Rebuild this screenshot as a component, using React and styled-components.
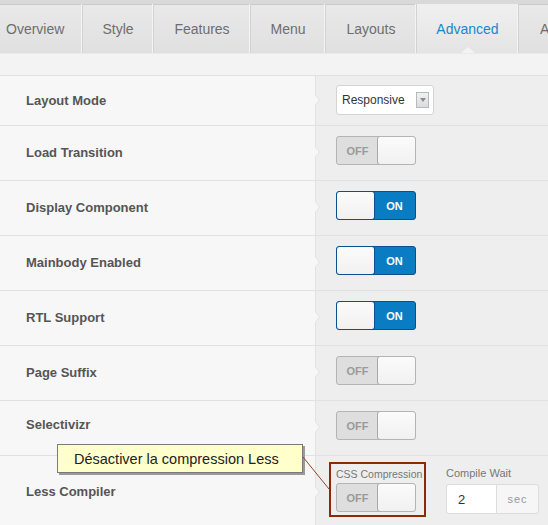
import styled, { createGlobalStyle } from 'styled-components'

const GlobalStyle = createGlobalStyle`
  html, body {
    margin: 0;
    padding: 0;
    background: #f7f7f7;
    font-family: 'Liberation Sans', Arial, sans-serif;
  }
`

const Page = styled.div`
  width: 548px;
  height: 525px;
  overflow: hidden;
  position: relative;
  background: #f7f7f7;
`
const TabBar = styled.div`
  height: 49px;
  display: flex;
  border-top: 4px solid #d9d9d9;
  box-shadow: inset 0 1px 0 #c9c9c9;
  background: linear-gradient(#e9e9e9, #e0e0e0);
  overflow: hidden;
  white-space: nowrap;
`
const Tab = styled.div`
  position: relative;
  flex: none;
  width: ${({ $w }) => $w}px;
  box-sizing: border-box;
  display: flex;
  align-items: center;
  justify-content: ${({ $pl }) => ($pl ? 'flex-start' : 'center')};
  padding-left: ${({ $pl }) => $pl || 0}px;
  font-size: 14px;
  color: ${({ $active }) => ($active ? '#1a87d0' : '#6e6e6e')};
  background: ${({ $active }) =>
    $active ? 'linear-gradient(#f0f0f0, #e4e4e4)' : 'transparent'};
  border-right: 1px solid #d2d2d2;
  box-shadow: inset -1px 0 0 #f4f4f4;
  &::after {
    content: '';
    display: ${({ $active }) => ($active ? 'block' : 'none')};
    position: absolute;
    bottom: 0;
    left: 50%;
    margin-left: -7px;
    border: 7px solid transparent;
    border-top: 0;
    border-bottom: 6px solid #f3f3f3;
  }
`
const SubBar = styled.div`
  height: 21px;
  background: #f3f3f3;
  border-top: 1px solid #eaeaea;
  border-bottom: 1px solid #e1e1e1;
`
const Row = styled.div`
  display: flex;
  height: ${({ $h }) => $h}px;
  border-bottom: 1px solid #e1e1e1;
`
const Label = styled.div`
  width: 289px;
  padding-left: 26px;
  padding-bottom: ${({ $lift }) => $lift || 1}px;
  box-sizing: content-box;
  display: flex;
  align-items: center;
  font-size: 13px;
  font-weight: bold;
  color: #555;
  background: #f7f7f7;
  flex: none;
`
const Control = styled.div`
  position: relative;
  flex: 1;
  display: flex;
  align-items: flex-start;
  padding-left: 20px;
  padding-top: ${({ $pt }) => $pt}px;
  background: #eeeeee;
  border-left: 1px solid #e2e2e2;
  &::before {
    content: '';
    position: absolute;
    left: -1px;
    top: ${({ $arrow }) => $arrow}px;
    margin-top: -6px;
    border: 6px solid transparent;
    border-right: 0;
    border-left: 5px solid #e2e2e2;
  }
  &::after {
    content: '';
    position: absolute;
    left: -1px;
    top: ${({ $arrow }) => $arrow}px;
    margin-top: -5px;
    border: 5px solid transparent;
    border-right: 0;
    border-left: 4px solid #f7f7f7;
  }
`
const Select = styled.div`
  width: 98px;
  height: 30px;
  box-sizing: border-box;
  display: flex;
  align-items: center;
  justify-content: space-between;
  padding: 0 4px 0 5px;
  background: #fff;
  border: 1px solid #d4d4d4;
  border-radius: 3px;
  font-size: 12px;
  color: #333;
`
const SelectArrow = styled.span`
  width: 11px;
  height: 14px;
  border: 1px solid #b5b9c0;
  background: linear-gradient(#f2f2f2, #dcdcdc);
  display: flex;
  align-items: center;
  justify-content: center;
  &::after {
    content: '';
    border: 3px solid transparent;
    border-bottom: 0;
    border-top: 4px solid #8c8c8c;
  }
`
const Toggle = styled.div`
  width: 80px;
  height: 29px;
  box-sizing: border-box;
  display: flex;
  flex-direction: ${({ $on }) => ($on ? 'row' : 'row-reverse')};
  border: 1px solid ${({ $on }) => ($on ? '#0b4f8c' : '#b4b4b4')};
  border-radius: 3px;
  background: ${({ $on }) => ($on ? '#0a7cc4' : '#dedede')};
  overflow: hidden;
`
const Knob = styled.div`
  width: 39px;
  box-sizing: border-box;
  background: linear-gradient(#fbfbfb, #f1f1f1);
  border-radius: 3px;
  border: 1px solid ${({ $on }) => ($on ? '#0b4f8c' : '#a9a9a9')};
  margin: -1px;
`
const ToggleText = styled.div`
  flex: 1;
  display: flex;
  align-items: center;
  justify-content: center;
  font-size: 11px;
  font-weight: bold;
  color: ${({ $on }) => ($on ? '#fff' : '#9a9a9a')};
`
const Highlight = styled.div`
  width: 97px;
  box-sizing: border-box;
  border: 2px solid #8c2a04;
  padding: 4px 0 3px 5px;
  margin-left: -7px;
`
const Group = styled.div`
  display: flex;
  flex-direction: column;
  margin-left: 20px;
  padding-top: 5px;
`
const SmallLabel = styled.div`
  font-size: ${({ $fs }) => $fs || 11}px;
  color: #777;
  margin-bottom: ${({ $mb }) => $mb}px;
  line-height: 13px;
  white-space: nowrap;
`
const InputGroup = styled.div`
  display: flex;
  height: 30px;
`
const Input = styled.div`
  width: 51px;
  box-sizing: border-box;
  background: #fff;
  border: 1px solid #dcdcdc;
  border-radius: 3px 0 0 3px;
  display: flex;
  align-items: center;
  padding-left: 11px;
  font-size: 13px;
  color: #333;
`
const Addon = styled.div`
  width: 42px;
  box-sizing: border-box;
  background: #f6f6f6;
  border: 1px solid #dcdcdc;
  border-left: 0;
  border-radius: 0 3px 3px 0;
  display: flex;
  align-items: center;
  justify-content: center;
  font-size: 11px;
  letter-spacing: 1px;
  color: #999;
`
const Tooltip = styled.div`
  position: absolute;
  left: 57px;
  top: 444px;
  width: 246px;
  height: 29px;
  box-sizing: border-box;
  background: #ffffcc;
  border: 1px solid #7a7a7a;
  box-shadow: 2px 2px 0 #9a9a9a;
  display: flex;
  align-items: center;
  padding-left: 16px;
  font-size: 14.5px;
  color: #222;
  white-space: nowrap;
`
const Connector = styled.svg`
  position: absolute;
  left: 0;
  top: 0;
  pointer-events: none;
`

const tabs = [
  { name: 'Overview', w: 83, pl: 6 },
  { name: 'Style', w: 71 },
  { name: 'Features', w: 97 },
  { name: 'Menu', w: 75 },
  { name: 'Layouts', w: 91 },
  { name: 'Advanced', w: 102 },
  { name: 'Assignment', w: 110, pl: 21 }
]

const rows = [
  { label: 'Load Transition', on: false },
  { label: 'Display Component', on: true },
  { label: 'Mainbody Enabled', on: true },
  { label: 'RTL Support', on: true },
  { label: 'Page Suffix', on: false },
  { label: 'Selectivizr', on: false, lift: 8 }
]

function Switch({ on }) {
  return (
    <Toggle $on={on}>
      <Knob $on={on} />
      <ToggleText $on={on}>{on ? 'ON' : 'OFF'}</ToggleText>
    </Toggle>
  )
}

export default function App() {
  return (
    <Page>
      <GlobalStyle />
      <TabBar>
        {tabs.map((t) => (
          <Tab key={t.name} $w={t.w} $pl={t.pl} $active={t.name === 'Advanced'}>
            {t.name}
          </Tab>
        ))}
      </TabBar>
      <SubBar />
      <Row $h={49}>
        <Label>Layout Mode</Label>
        <Control $pt={9} $arrow={24}>
          <Select>
            Responsive
            <SelectArrow />
          </Select>
        </Control>
      </Row>
      {rows.map((r) => (
        <Row key={r.label} $h={54}>
          <Label $lift={r.lift}>{r.label}</Label>
          <Control $pt={10} $arrow={26}>
            <Switch on={r.on} />
          </Control>
        </Row>
      ))}
      <Row $h={75}>
        <Label $lift={4}>Less Compiler</Label>
        <Control $pt={6} $arrow={36}>
          <Highlight>
            <SmallLabel $fs={10.5} $mb={2}>CSS Compression</SmallLabel>
            <Switch on={false} />
          </Highlight>
          <Group>
            <SmallLabel $mb={4}>Compile Wait</SmallLabel>
            <InputGroup>
              <Input>2</Input>
              <Addon>sec</Addon>
            </InputGroup>
          </Group>
        </Control>
      </Row>
      <Tooltip>Désactiver la compression Less</Tooltip>
      <Connector width="548" height="525">
        <line x1="303" y1="457" x2="329" y2="489" stroke="#a0401a" strokeWidth="1" />
      </Connector>
    </Page>
  )
}
